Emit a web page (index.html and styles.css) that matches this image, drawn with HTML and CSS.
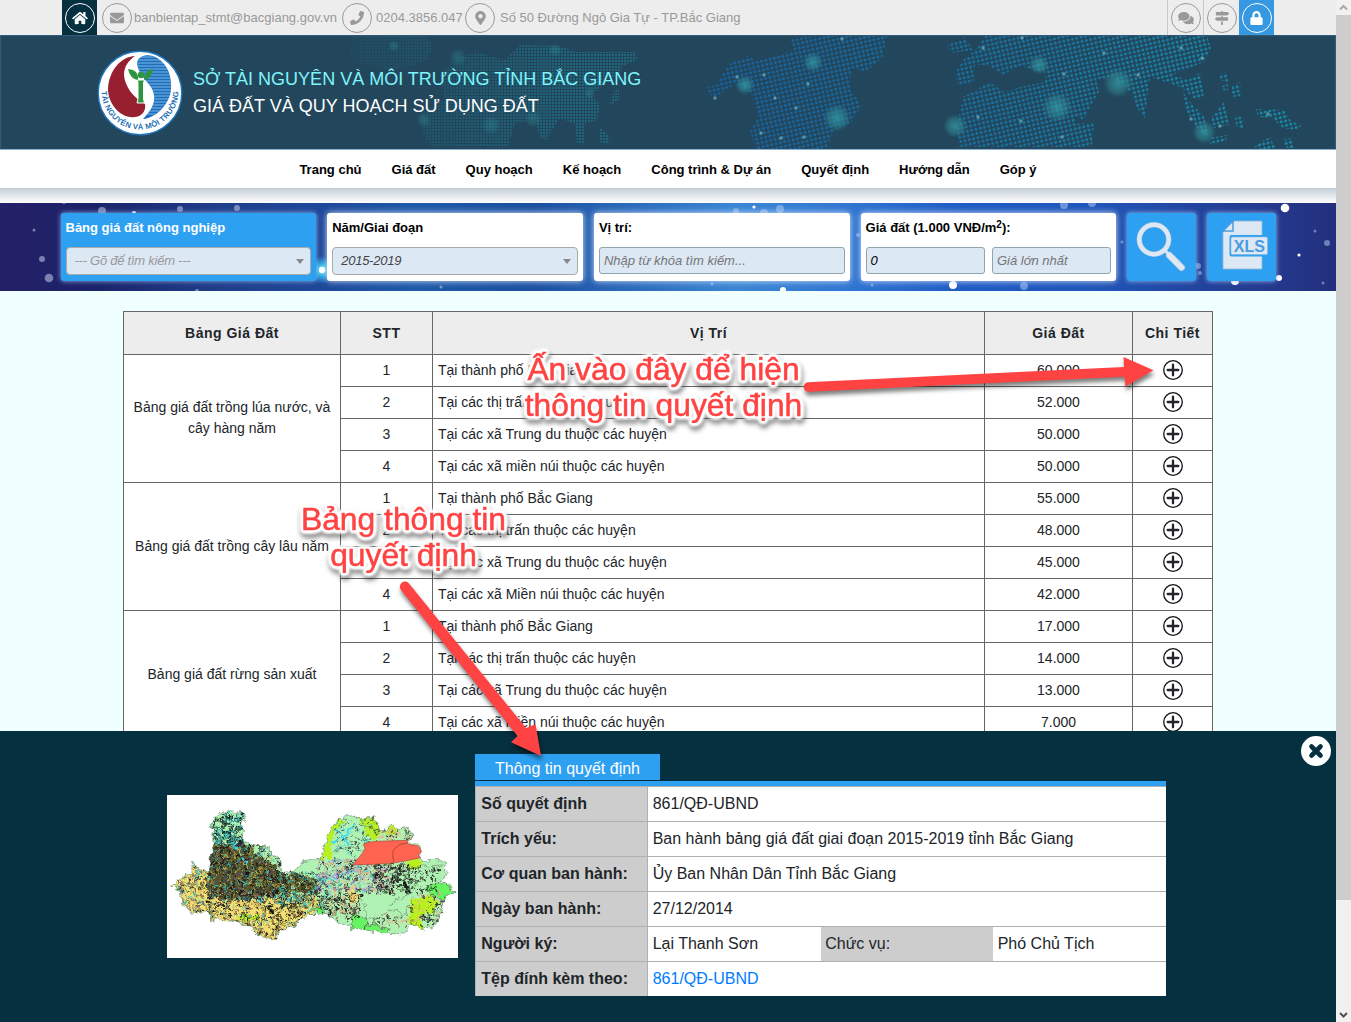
FILE: index.html
```html
<!DOCTYPE html>
<html lang="vi">
<head>
<meta charset="utf-8">
<title>Giá đất và quy hoạch sử dụng đất</title>
<link rel="stylesheet" href="styles.css">
</head>
<body>
<svg class="defs" width="0" height="0">
  <symbol id="i-home" viewBox="0 0 576 512"><path d="M280.37 148.26L96 300.11V464a16 16 0 0 0 16 16l112.06-.29a16 16 0 0 0 15.92-16V368a16 16 0 0 1 16-16h64a16 16 0 0 1 16 16v95.64a16 16 0 0 0 16 16.05L464 480a16 16 0 0 0 16-16V300L295.67 148.26a12.19 12.19 0 0 0-15.3 0zM571.6 251.47L488 182.56V44.05a12 12 0 0 0-12-12h-56a12 12 0 0 0-12 12v72.61L318.47 43a48 48 0 0 0-61 0L4.34 251.47a12 12 0 0 0-1.6 16.9l25.5 31A12 12 0 0 0 45.15 301l235.22-193.74a12.19 12.19 0 0 1 15.3 0L530.9 301a12 12 0 0 0 16.9-1.6l25.5-31a12 12 0 0 0-1.7-16.93z"/></symbol>
  <symbol id="i-mail" viewBox="0 0 512 512"><path d="M502.3 190.8c3.9-3.1 9.7-.2 9.7 4.7V400c0 26.5-21.5 48-48 48H48c-26.5 0-48-21.5-48-48V195.6c0-5 5.7-7.8 9.7-4.7 22.4 17.4 52.1 39.5 154.1 113.6 21.1 15.4 56.7 47.8 92.2 47.6 35.7.3 72-32.8 92.3-47.6 102-74.1 131.6-96.3 154-113.7zM256 320c23.2.4 56.6-29.2 73.4-41.4 132.7-96.3 142.8-104.7 173.4-128.7 5.8-4.5 9.2-11.5 9.2-18.9v-19c0-26.5-21.5-48-48-48H48c-26.5 0-48 21.5-48 48v19c0 7.4 3.4 14.3 9.2 18.9 30.6 23.9 40.7 32.4 173.4 128.7 16.8 12.2 50.2 41.8 73.4 41.4z"/></symbol>
  <symbol id="i-phone" viewBox="0 0 512 512"><path d="M493.4 24.6l-104-24c-11.3-2.6-22.9 3.3-27.5 13.9l-48 112c-4.2 9.8-1.4 21.3 6.9 28l60.6 49.6c-36 76.7-98.9 140.5-177.2 177.2l-49.6-60.6c-6.8-8.3-18.2-11.1-28-6.9l-112 48C3.9 366.5-2 378.1.6 389.4l24 104C27.1 504.2 36.7 512 48 512c256.1 0 464-207.5 464-464 0-11.2-7.7-20.9-18.6-23.4z"/></symbol>
  <symbol id="i-pin" viewBox="0 0 384 512"><path d="M172.268 501.67C26.97 291.031 0 269.413 0 192 0 85.961 85.961 0 192 0s192 85.961 192 192c0 77.413-26.97 99.031-172.268 309.67-9.535 13.774-29.93 13.773-39.464 0zM192 272c44.183 0 80-35.817 80-80s-35.817-80-80-80-80 35.817-80 80 35.817 80 80 80z"/></symbol>
  <symbol id="i-chat" viewBox="0 0 576 512"><path d="M416 192c0-88.4-93.1-160-208-160S0 103.6 0 192c0 34.3 14.1 65.9 38 92-13.4 30.2-35.5 54.2-35.8 54.5-2.2 2.3-2.8 5.7-1.5 8.7S4.8 352 8 352c36.6 0 66.9-12.3 88.7-25 32.2 15.7 70.3 25 111.3 25 114.9 0 208-71.6 208-160zm122 220c23.9-26 38-57.7 38-92 0-66.9-53.5-124.2-129.3-148.1.9 6.6 1.3 13.3 1.3 20.1 0 105.9-107.7 192-240 192-10.8 0-21.3-.8-31.7-1.9C207.8 439.6 281.8 480 368 480c41 0 79.1-9.2 111.3-25 21.8 12.7 52.1 25 88.7 25 3.2 0 6.1-1.9 7.3-4.8 1.3-2.9.7-6.3-1.5-8.7-.3-.3-22.4-24.2-35.8-54.5z"/></symbol>
  <symbol id="i-signs" viewBox="0 0 512 512"><path d="M507.31 84.69L464 41.37c-6-6-14.14-9.37-22.63-9.37H288V16c0-8.84-7.16-16-16-16h-32c-8.84 0-16 7.16-16 16v16H56c-13.25 0-24 10.75-24 24v80c0 13.25 10.75 24 24 24h385.37c8.49 0 16.62-3.37 22.63-9.37l43.31-43.31c6.25-6.26 6.25-16.38 0-22.63zM224 496c0 8.84 7.16 16 16 16h32c8.84 0 16-7.16 16-16V384h-64v112zm232-272H288v-32h-64v32H70.63c-8.49 0-16.62 3.37-22.63 9.37L4.69 276.69c-6.25 6.25-6.25 16.38 0 22.63L48 342.63c6 6 14.14 9.37 22.63 9.37H456c13.25 0 24-10.75 24-24v-80c0-13.25-10.75-24-24-24z"/></symbol>
  <symbol id="i-lock" viewBox="0 0 448 512"><path d="M400 224h-24v-72C376 68.2 307.8 0 224 0S72 68.2 72 152v72H48c-26.5 0-48 21.5-48 48v192c0 26.5 21.5 48 48 48h352c26.5 0 48-21.5 48-48V272c0-26.5-21.5-48-48-48zm-104 0H152v-72c0-39.7 32.3-72 72-72s72 32.3 72 72v72z"/></symbol>
  <symbol id="i-plus" viewBox="0 0 20 20"><circle cx="10" cy="10" r="9.3" fill="#fff" stroke="#111" stroke-width="1.3"/><path d="M10 4.7v10.6M4.7 10h10.6" stroke="#212529" stroke-width="2.3" stroke-linecap="round"/></symbol>
</svg>

<div class="window">
<div class="page">
  <div class="topbar">
    <span class="tile home"><span class="ring"><svg width="16" height="14"><use href="#i-home"/></svg></span></span>
    <span class="ring mail"><svg width="14" height="14"><use href="#i-mail"/></svg></span>
    <span class="t-mail">banbientap_stmt@bacgiang.gov.vn</span>
    <span class="ring"><svg width="14" height="14"><use href="#i-phone"/></svg></span>
    <span class="t-phone">0204.3856.047</span>
    <span class="ring"><svg width="11" height="14"><use href="#i-pin"/></svg></span>
    <span class="t-addr">Số 50 Đường Ngô Gia Tự - TP.Bắc Giang</span>
    <span class="quick">
      <span class="cell"><span class="ring"><svg width="16" height="14"><use href="#i-chat"/></svg></span></span>
      <span class="cell"><span class="ring"><svg width="14" height="14"><use href="#i-signs"/></svg></span></span>
      <span class="tile lock"><span class="ring"><svg width="13" height="14"><use href="#i-lock"/></svg></span></span>
    </span>
  </div>

  <header class="banner">
    <svg class="world" viewBox="0 35 1336 115" width="1336" height="115">
      <defs>
        <linearGradient id="sea" gradientUnits="userSpaceOnUse" x1="700" y1="0" x2="1300" y2="0"><stop offset="0" stop-color="#1a5f9c"/><stop offset=".45" stop-color="#1a6f9c"/><stop offset="1" stop-color="#1a8aa5"/></linearGradient>
        <pattern id="dots" width="4.4" height="4.4" patternUnits="userSpaceOnUse" patternTransform="rotate(-13)"><circle cx="2.2" cy="2.2" r="1.5" fill="#fff"/></pattern>
        <pattern id="fine" width="3" height="3" patternUnits="userSpaceOnUse"><rect width="2" height="2" fill="#1f7488"/></pattern>
        <linearGradient id="fade" gradientUnits="userSpaceOnUse" x1="330" y1="0" x2="560" y2="0"><stop offset="0" stop-color="#fff" stop-opacity=".1"/><stop offset="1" stop-color="#fff" stop-opacity=".7"/></linearGradient>
        <mask id="mfine" maskUnits="userSpaceOnUse" x="300" y="35" width="360" height="115"><path fill="url(#fade)" d="M350 36H425L433 45 428 60 410 66 390 70 350 60ZM440 75 455 60 475 52 505 60 520 45 560 46 575 52 635 52 638 60 622 66 620 80 605 74 600 90 588 92 600 105 597 120 585 124 585 145 577 143 575 124 560 118 546 140 540 138 535 118 515 124 508 146 430 146 422 130 420 114 445 100ZM614 92 619 88 619 100 609 106ZM600 127 609 136 610 144 600 142Z"/></mask>
        <mask id="mdots" maskUnits="userSpaceOnUse" x="690" y="35" width="620" height="115"><path fill="url(#dots)" d="M706 88 718 84 722 74 732 62 748 56 757 61 770 57 794 50 790 40 805 37 825 36H887L882 58 866 72 851 68 850 90 862 105 850 124 834 130 826 149H756L750 130 758 118 752 95 735 84 722 93 713 98ZM948 45 965 37 973 50 950 53ZM963 60 975 50 985 36H1207L1211 48 1204 62 1172 75 1188 80 1201 72 1204 98 1196 100 1182 88 1172 84 1150 77 1147 100 1145 118 1137 108 1131 92 1115 78 1096 79 1099 92 1090 107 1084 120 1074 116 1076 124 1094 122 1092 147H958L957 125 963 97 990 82 1004 92 1025 86 1045 82 1046 73 1020 66 1002 75 990 66 975 64 973 84 958 86 955 74ZM1183 92 1190 102 1204 116 1208 135 1198 130 1186 110ZM1220 74 1228 72 1228 82 1220 80ZM1222 86 1228 84V91L1222 90ZM1232 86 1240 82 1241 96 1232 97ZM1211 118 1224 102 1230 124 1214 128ZM1209 138 1227 135 1226 142 1210 144ZM1235 115 1244 118 1243 129 1236 126ZM1256 109 1285 110 1290 120 1301 126 1296 130 1283 128 1272 118 1258 117ZM1262 141 1270 137 1276 149 1252 149ZM1283 140 1292 138 1294 149 1284 147Z"/></mask>
        <radialGradient id="glow"><stop offset="0" stop-color="#35a0a8" stop-opacity=".75"/><stop offset=".6" stop-color="#318a96" stop-opacity=".5"/><stop offset="1" stop-color="#2f7f8c" stop-opacity="0"/></radialGradient>
      </defs>
      <rect x="300" y="35" width="360" height="115" fill="url(#fine)" mask="url(#mfine)"/>
      <g fill="url(#glow)" opacity=".45"><circle cx="555" cy="50" r="7"/><circle cx="458" cy="57" r="9"/><circle cx="491" cy="125" r="10"/><circle cx="533" cy="119" r="9"/><circle cx="590" cy="93" r="6"/><circle cx="424" cy="120" r="8"/><circle cx="394" cy="46" r="6"/></g>
      <rect x="690" y="35" width="620" height="115" fill="url(#sea)" mask="url(#mdots)"/>
      <g fill="url(#glow)"><circle cx="955" cy="126" r="12"/><circle cx="1039" cy="65" r="10"/><circle cx="1057" cy="107" r="15"/><circle cx="1118" cy="83" r="15"/><circle cx="1204" cy="132" r="12"/><circle cx="745" cy="85" r="10"/><circle cx="813" cy="62" r="10"/><circle cx="837" cy="118" r="14"/></g>
      <g fill="#7dbcc0" opacity=".65"><circle cx="715" cy="98" r="1.7"/><circle cx="737" cy="77" r="1.7"/><circle cx="764" cy="75" r="1.7"/><circle cx="775" cy="98" r="1.7"/><circle cx="796" cy="108" r="1.7"/><circle cx="808" cy="84" r="1.7"/><circle cx="761" cy="133" r="1.7"/><circle cx="781" cy="138" r="1.7"/><circle cx="804" cy="137" r="1.7"/><circle cx="842" cy="39" r="1.7"/><circle cx="983" cy="48" r="1.7"/><circle cx="1022" cy="38" r="1.7"/><circle cx="1104" cy="53" r="1.7"/><circle cx="1181" cy="48" r="1.7"/><circle cx="1202" cy="58" r="1.7"/><circle cx="1138" cy="75" r="1.7"/><circle cx="1064" cy="74" r="1.7"/><circle cx="978" cy="117" r="1.7"/><circle cx="1021" cy="121" r="1.7"/><circle cx="1062" cy="137" r="1.7"/><circle cx="1191" cy="119" r="1.7"/><circle cx="1220" cy="126" r="1.7"/><circle cx="1268" cy="114" r="1.7"/></g>
    </svg>
    <div class="brand">
      <svg class="logo" width="86" height="86" viewBox="-43 -43 86 86">
        <defs><path id="arc" d="M-38.500 -2A38.500 38.500 0 0 0 38.500 -2"/>
        <clipPath id="right"><path d="M-3-30C-2-37 6-39 13-37 26-32 32-19 31-4 30 10 17 25 3 26 15 14 17 4 11-6 5-14-2-20-3-30Z"/></clipPath></defs>
        <circle r="41.800" fill="#fff" stroke="#2276bd" stroke-width="1.4"/>
        <path fill="#961f30" d="M-5-37C-20-36-31-22-32-4-32 10-20 26-5 24 3 23 6 17 5 11-7 4-15-6-16-18-16-27-11-33-5-37Z"/>
        <g clip-path="url(#right)"><rect x="-10" y="-40" width="50" height="70" fill="#1d6fbd"/><path d="M-10-36H40M-10-33H40M-10-30H40M-10-27H40M-10-24H40M-10-21H40M-10-18H40M-10-15H40M-10-12H40M-10-9H40M-10-6H40M-10-3H40M-10 0H40M-10 3H40M-10 6H40M-10 9H40M-10 12H40M-10 15H40M-10 18H40M-10 21H40" stroke="#7db8e6" stroke-width="1.2"/></g>
        <path d="M-2.500-13H4.500L3.500-10 3.500 6 4.500 10H-3L-2 6V-10Z" fill="#2f9440" stroke="#fff" stroke-width="1"/><circle cx="1" cy="-18" r="3.200" fill="#2f9440"/>
        <path d="M-12-24Q-1-23-2-13-10-14-12-24ZM13-24Q4-23 4-13 12-14 13-24Z" fill="#2f9440"/>
        <text class="logo-text"><textPath href="#arc" startOffset="50%">TÀI NGUYÊN VÀ MÔI TRƯỜNG</textPath></text>
      </svg>
      <div class="titles">
        <div class="dept">SỞ TÀI NGUYÊN VÀ MÔI TRƯỜNG TỈNH BẮC GIANG</div>
        <div class="app">GIÁ ĐẤT VÀ QUY HOẠCH SỬ DỤNG ĐẤT</div>
      </div>
    </div>
  </header>

  <nav class="menu"><a>Trang chủ</a><a>Giá đất</a><a>Quy hoạch</a><a>Kế hoạch</a><a>Công trình &amp; Dự án</a><a>Quyết định</a><a>Hướng dẫn</a><a>Góp ý</a></nav>
  <div class="menu-shade"></div>

  <section class="filters">
    <svg class="sparks" width="1336" height="88" viewBox="0 203 1336 88">
      <g fill="#b9c0e0" opacity=".6"><circle cx="102" cy="211" r="4"/><circle cx="180" cy="209" r="3"/><circle cx="237" cy="208" r="3"/><circle cx="42" cy="259" r="3"/><circle cx="49" cy="278" r="4.3"/><circle cx="34" cy="230" r="1.5"/><circle cx="64" cy="202" r="2"/><circle cx="441" cy="287" r="1.5"/><circle cx="197" cy="291" r="2"/></g>
      <g fill="#b5d0f5" opacity=".5"><circle cx="736" cy="211" r="3"/><circle cx="764" cy="213" r="4"/><circle cx="780" cy="209" r="4"/><circle cx="1064" cy="205" r="4"/><circle cx="1092" cy="203" r="4"/><circle cx="1024" cy="286" r="4"/><circle cx="712" cy="284" r="1.5"/><circle cx="872" cy="285" r="1.5"/><circle cx="858" cy="235" r="2"/><circle cx="1122" cy="242" r="1.5"/><circle cx="1198" cy="266" r="3"/><circle cx="1200" cy="273" r="2"/><circle cx="1327" cy="243" r="3"/><circle cx="1315" cy="231" r="1.5"/><circle cx="1323" cy="283" r="1.5"/></g>
      <g fill="#fff"><circle cx="754" cy="207" r="1.6"/><circle cx="783" cy="290" r="3"/><circle cx="953" cy="285" r="4"/><circle cx="1285" cy="208" r="4.3"/><circle cx="1279" cy="278" r="3"/><circle cx="1235" cy="281" r="4"/><circle cx="1299" cy="255" r="1.6"/><circle cx="134" cy="213" r="2"/></g>
      <circle cx="322" cy="270" r="14" fill="url(#cyan)"/><circle cx="322" cy="270" r="3.2" fill="#fff"/>
      <defs><radialGradient id="cyan"><stop offset="0" stop-color="#7ff"/><stop offset=".5" stop-color="#28b5f0" stop-opacity=".8"/><stop offset="1" stop-color="#28b5f0" stop-opacity="0"/></radialGradient></defs>
    </svg>
    <div class="box blue"><b>Bảng giá đất nông nghiệp</b><div class="select hint">--- Gõ để tìm kiếm ---<i class="caret"></i></div></div>
    <div class="box"><b>Năm/Giai đoạn</b><div class="select">2015-2019<i class="caret"></i></div></div>
    <div class="box"><b>Vị trí:</b><div class="input ph">Nhập từ khóa tìm kiếm...</div></div>
    <div class="box"><b>Giá đất (1.000 VNĐ/m<sup>2</sup>):</b><div class="pair"><div class="input">0</div><div class="input ph">Giá lớn nhất</div></div></div>
    <div class="btn"><svg width="69" height="68" viewBox="0 0 69 68"><g fill="none" stroke="#8db5d8" stroke-linecap="round"><circle cx="27" cy="26.500" r="14.700" stroke-width="5.600"/><path d="M42.500 42.500L54.500 54.500" stroke-width="7.400"/></g><g fill="none" stroke="#dce8f4" stroke-linecap="round"><path d="M38 37.500L43.500 43" stroke-width="3"/><circle cx="27" cy="26.500" r="14.700" stroke-width="4.400"/><path d="M42.500 42.500L54.500 54.500" stroke-width="6"/></g></svg></div>
    <div class="btn"><svg width="69" height="68" viewBox="0 0 69 68"><path d="M27 8H55V56H16V19Z" fill="#dce8f4" stroke="#8db5d8" stroke-width=".8"/><path d="M16 18L26 8V18Z" fill="#dce8f4" stroke="#4a9be0" stroke-width="1.5"/><rect x="22.500" y="22" width="38.500" height="21.500" rx="2" fill="#2ea0f2"/><rect x="24" y="24" width="36.500" height="17.500" rx="1.500" fill="#dce8f4" stroke="#8db5d8" stroke-width=".6"/><text x="42.300" y="38.700" class="xls">XLS</text></svg></div>
  </section>

  <main class="content">
    <table class="prices">
      <colgroup><col class="c1"><col class="c2"><col class="c3"><col class="c4"><col class="c5"></colgroup>
      <thead><tr><th>Bảng Giá Đất</th><th>STT</th><th>Vị Trí</th><th>Giá Đất</th><th>Chi Tiết</th></tr></thead>
      <tbody>
      <tr><td rowspan="4" class="two">Bảng giá đất trồng lúa nước, và cây hàng năm</td><td>1</td><td>Tại thành phố Bắc Giang</td><td>60.000</td><td><svg width="20" height="20"><use href="#i-plus"/></svg></td></tr>
      <tr><td>2</td><td>Tại các thị trấn thuộc các huyện</td><td>52.000</td><td><svg width="20" height="20"><use href="#i-plus"/></svg></td></tr>
      <tr><td>3</td><td>Tại các xã Trung du thuộc các huyện</td><td>50.000</td><td><svg width="20" height="20"><use href="#i-plus"/></svg></td></tr>
      <tr><td>4</td><td>Tại các xã miền núi thuộc các huyện</td><td>50.000</td><td><svg width="20" height="20"><use href="#i-plus"/></svg></td></tr>
      <tr><td rowspan="4">Bảng giá đất trồng cây lâu năm</td><td>1</td><td>Tại thành phố Bắc Giang</td><td>55.000</td><td><svg width="20" height="20"><use href="#i-plus"/></svg></td></tr>
      <tr><td>2</td><td>Tại các thị trấn thuộc các huyện</td><td>48.000</td><td><svg width="20" height="20"><use href="#i-plus"/></svg></td></tr>
      <tr><td>3</td><td>Tại các xã Trung du thuộc các huyện</td><td>45.000</td><td><svg width="20" height="20"><use href="#i-plus"/></svg></td></tr>
      <tr><td>4</td><td>Tại các xã Miền núi thuộc các huyện</td><td>42.000</td><td><svg width="20" height="20"><use href="#i-plus"/></svg></td></tr>
      <tr><td rowspan="4">Bảng giá đất rừng sản xuất</td><td>1</td><td>Tại thành phố Bắc Giang</td><td>17.000</td><td><svg width="20" height="20"><use href="#i-plus"/></svg></td></tr>
      <tr><td>2</td><td>Tại các thị trấn thuộc các huyện</td><td>14.000</td><td><svg width="20" height="20"><use href="#i-plus"/></svg></td></tr>
      <tr><td>3</td><td>Tại các xã Trung du thuộc các huyện</td><td>13.000</td><td><svg width="20" height="20"><use href="#i-plus"/></svg></td></tr>
      <tr><td>4</td><td>Tại các xã miền núi thuộc các huyện</td><td>7.000</td><td><svg width="20" height="20"><use href="#i-plus"/></svg></td></tr>
      </tbody>
    </table>
  </main>

  <section class="detail">
    <svg class="map" width="291" height="163" viewBox="21 30 873 489">
      <defs><clipPath id="land"><path id="coast" d="M150 122 170 90 185 82 245 80 257 95 247 118 247 165 290 182 332 184 335 210 360 222 370 262 410 258 430 230 480 222 486 200 505 150 530 105 560 95 600 98 640 98 660 135 680 140 685 120 705 122 712 135 745 130 758 155 740 168 785 185 780 225 855 228 858 262 840 285 870 295 882 322 850 342 842 390 822 432 790 430 750 420 735 450 690 448 620 435 575 430 520 400 500 385 440 390 400 425 370 433 352 440 355 458 335 468 310 455 285 445 275 425 235 415 190 405 155 405 145 375 112 385 95 388 68 350 60 320 38 300 72 275 95 255 98 228 110 250 145 262 150 225 160 200 155 160 165 130Z"/></clipPath>
      <filter id="rough" x="-5%" y="-5%" width="110%" height="110%"><feTurbulence type="fractalNoise" baseFrequency=".05" numOctaves="3" seed="4"/><feDisplacementMap in="SourceGraphic" scale="26" xChannelSelector="R" yChannelSelector="G"/></filter></defs>
      <g filter="url(#rough)"><g clip-path="url(#land)">
        <rect x="30" y="70" width="860" height="410" fill="#b0f2b3"/>
        <path fill="#f3df72" d="M30 220 150 260 240 350 400 330 480 340 470 380 370 440 340 480 30 420Z"/>
        <path fill="#55542f" d="M150 185 250 175 370 265 470 280 480 330 400 320 260 345 140 340Z"/>
        <path fill="#b8f021" d="M480 225 500 150 530 105 555 105 520 150 515 215ZM590 90 650 95 665 150 640 170 610 130ZM682 118 708 122 708 150 682 145ZM755 345 805 330 840 350 820 385 780 395 790 430 745 420ZM740 225 790 222 780 250 740 250ZM230 390 300 390 300 410 240 410Z"/>
        <path fill="#f3df72" d="M550 300 572 300 600 345 575 358Z"/>
        <path fill="#66f560" stroke="#555" stroke-width="2" d="M575 380 620 400 620 435 575 435ZM620 415 690 430 680 448 620 440ZM460 375 495 362 480 392ZM800 300 850 290 885 320 845 345 805 330Z"/>
        <path fill="none" stroke="#4de" stroke-width="7" d="M515 175 545 155 530 130M545 155 580 130M545 155 570 180M190 130 240 200 260 240M480 290 540 270 600 250"/>
        <g id="speckle"></g>
        <path fill="none" stroke="#555" stroke-width="2" opacity=".7" d="M590 330 620 360 615 395 650 405 690 375 735 385 760 345M690 360 740 330 760 300M715 260 760 245 850 240M520 200 570 185 610 200"/>
      </g><use href="#coast" fill="none" stroke="#6a8a70" stroke-width="2"/></g>
      <path d="M578 240 607 205 615 190 610 178 625 172 650 169 740 166 745 178 775 182 785 200 775 210 782 218 735 228 700 234 640 238Z" fill="#ff6450" stroke="#a9483c" stroke-width="2"/>
      <path d="M740 175 720 178 700 195 698 215 702 232" fill="none" stroke="#91352c" stroke-width="2"/>
    </svg>
    <div class="decision">
      <div class="tab">Thông tin quyết định</div>
      <div class="rows">
        <div class="row"><b>Số quyết định</b><span>861/QĐ-UBND</span></div>
        <div class="row"><b>Trích yếu:</b><span>Ban hành bảng giá đất giai đoạn 2015-2019 tỉnh Bắc Giang</span></div>
        <div class="row"><b>Cơ quan ban hành:</b><span>Ủy Ban Nhân Dân Tỉnh Bắc Giang</span></div>
        <div class="row"><b>Ngày ban hành:</b><span>27/12/2014</span></div>
        <div class="row"><b>Người ký:</b><span>Lại Thanh Sơn</span><span class="grey">Chức vụ:</span><span>Phó Chủ Tịch</span></div>
        <div class="row"><b>Tệp đính kèm theo:</b><span><a>861/QĐ-UBND</a></span></div>
      </div>
    </div>
    <svg class="close" width="30" height="30" viewBox="0 0 30 30"><circle cx="15" cy="15" r="15" fill="#fff"/><path d="M10.500 10.500L19.500 19.500M19.500 10.500L10.500 19.500" stroke="#05303f" stroke-width="4.600" stroke-linecap="round"/></svg>
  </section>
</div>
<div class="scrollbar"><svg width="15" height="15"><path d="M4 9.500L7.500 6 11 9.500" fill="none" stroke="#a8a8a8" stroke-width="2"/></svg><div class="thumb"></div><svg width="15" height="15"><path d="M4 6L7.500 9.500 11 6" fill="none" stroke="#505050" stroke-width="2"/></svg></div>

<svg class="notes" width="1351" height="1022">
  <g class="arrow"><path d="M808 382.200 1124 367 1123.500 357 1153.500 370.300 1125.500 386.500 1124.500 376.800 809 391.800A4.800 4.800 0 0 1 808 382.200Z"/></g>
  <g class="arrow"><path d="M409 583.500 526 728 535.500 724.300 541 756 511 742.300 517.500 736 401 590A5 5 0 0 1 409 583.500Z"/></g>
  <g class="note"><g class="halo"><text x="663.500" y="379.500">Ấn vào đây để hiện</text><text x="663.500" y="415.500">thông tin quyết định</text></g></g>
  <g class="note"><g class="halo"><text x="403.500" y="529.500">Bảng thông tin</text><text x="403.500" y="565.500">quyết định</text></g></g>
</svg>
</div>
<script src="map.js"></script>
</body>
</html>
```
FILE: styles.css
```css
* { box-sizing: border-box; }
body { margin: 0; font-family: "Liberation Sans", Arial, sans-serif; color: #212529; background: #f0ffff; }
.defs { position: absolute; }
.window { position: relative; display: flex; width: 1351px; height: 1022px; overflow: hidden; }
.page { width: 1336px; display: flex; flex-direction: column; }

.topbar { height: 35px; flex: none; background: #ededed; display: flex; align-items: center; padding-left: 62px; padding-right: 62px; font-size: 13px; color: #999; white-space: nowrap; }
.ring { width: 30px; height: 30px; border: 1px solid #999; border-radius: 50%; display: flex; align-items: center; justify-content: center; flex: none; position: relative; top: .5px; }
.ring svg { fill: #999; }
.tile { width: 35px; height: 35px; display: flex; align-items: center; justify-content: center; }
.tile .ring { border-color: #fff; }
.tile svg { fill: #fff; }
.home { background: #05303f; }
.lock { background: #3598e0; }
.mail { margin-left: 5px; }
.t-mail { margin: 0 5px 0 2px; width: 203px; }
.t-phone { width: 89px; margin-left: 4px; }
.t-addr { margin-left: 5px; }
.quick { margin-left: auto; display: flex; }
.cell { width: 36px; height: 35px; border-left: 1px solid #c8c8c8; display: flex; align-items: center; justify-content: center; padding-left: 1px; }

.banner { height: 115px; flex: none; position: relative; background: #22465c; box-shadow: inset 0 0 2px #5a92bd, inset 0 -1px 0 #9dbbd2; }
.world { position: absolute; left: 0; top: 0; }
.brand { position: relative; display: flex; padding: 15px 0 0 97px; }
.logo { display: block; }
.logo-text { font-size: 7.700px; font-weight: bold; fill: #1f6fb5; text-anchor: middle; letter-spacing: .25px; }
.titles { padding: 16px 0 0 10px; font-size: 18px; line-height: 27px; white-space: nowrap; }
.dept { color: #7ff5fb; }
.app { color: #fff; }

.menu { height: 38px; flex: none; background: #fff; display: flex; justify-content: center; align-items: center; gap: 30px; font-size: 13px; font-weight: bold; color: #000; }
.menu-shade { height: 15px; flex: none; background: linear-gradient(#c3ced6, #e6e9ef 55%, #fdfdfe); }

.filters { height: 88px; flex: none; position: relative; display: flex; gap: 11px; padding: 10px 0 0 60.500px; background: linear-gradient(90deg, #252067 0, #1b2369 7%, #203d8a 16%, #1f489a 24%, #1e5aa8 31%, #1c4f9f 40%, #2763b4 45%, #3b86d4 55%, #3277d2 63%, #1f5cc4 72%, #2055b8 82%, #233f96 92%, #232f7e 100%); }
.sparks { position: absolute; left: 0; top: 0; }
.box { position: relative; width: 255.700px; height: 68px; flex: none; background: #fff; border-radius: 3px; padding: 5px 5px 0; font-size: 13px; color: #000; box-shadow: 0 0 6px #d5e4fa; }
.box b { display: block; height: 20px; line-height: 20px; margin-bottom: 9px; white-space: nowrap; }
.box sup { font-size: 10px; line-height: 0; vertical-align: 4px; }
.blue { background: #2ea0f2; box-shadow: 0 0 5px #8fb6e6; }
.blue b { color: #fff; }
.select, .input { background: #dce8f4; border: 1px solid #aaa; border-radius: 4px; font-style: italic; }
.select { height: 28px; line-height: 28px; padding: 0 6px 0 8px; display: flex; align-items: center; justify-content: space-between; color: #444; letter-spacing: -.25px; }
.hint { color: #999; }
.caret { border: 4px solid transparent; border-top: 5px solid #888; border-bottom: 0; }
.input { height: 27px; line-height: 25px; padding-left: 4px; border-color: #8fa5ad; border-radius: 3px; flex: 1; }
.ph { color: #757575; }
.pair { display: flex; gap: 7px; }
.btn { position: relative; width: 69px; height: 68px; flex: none; background: #2ea0f2; border-radius: 3px; box-shadow: 0 0 5px #9dbbe8; }
.xls { font-size: 16px; font-weight: bold; fill: #4a9be0; text-anchor: middle; }

.content { flex: 1; min-height: 0; overflow: hidden; background: #f0ffff; padding: 20px 0 0 123px; }
.prices { width: 1090px; table-layout: fixed; border-collapse: collapse; background: #fff; font-size: 14px; line-height: 21px; }
.c1 { width: 217px; } .c2 { width: 92px; } .c3 { width: 552px; } .c4 { width: 148px; } .c5 { width: 80px; }
.prices th, .prices td { border: 1px solid #666; padding: 0 5px; text-align: center; height: 32px; }
.prices th { height: 43px; background: #ededed; letter-spacing: .5px; }
.prices td:nth-last-child(3) { text-align: left; }
.prices .two { padding-bottom: 2px; }
.prices td:last-child { padding-bottom: 2px; }
.prices svg { display: block; margin: 0 auto; }

.detail { height: 291px; flex: none; position: relative; background: #05303f; display: flex; align-items: flex-start; padding: 23px 0 0 167px; }
.map { display: block; margin: 41px 17px 0 0; background: #fff; }
.decision { width: 691px; }
.tab { width: 185px; height: 26px; line-height: 29px; margin-bottom: 1px; background: #2ea0f2; color: #fff; text-align: center; }
.rows { border-top: 5px solid #2ea0f2; }
.row { display: flex; height: 35px; line-height: 33px; border-top: 1px solid #adb1b5; background: #fff; border-left: 1px solid #adb1b5; white-space: nowrap; }
.row b { width: 172px; background: #cdcdcd; border-right: 1px solid #adb1b5; padding-left: 5.300px; }
.row span { width: 172.500px; padding-left: 4.700px; }
.row .grey { background: #cdcdcd; }
.row a { color: #007bff; }
.close { position: absolute; left: 1301px; top: 5px; }

.scrollbar { width: 15px; height: 1022px; background: #f1f1f1; display: flex; flex-direction: column; }
.scrollbar svg { flex: none; }
.thumb { height: 885px; background: #cdcdcd; margin-bottom: auto; }

.notes { position: absolute; left: 0; top: 0; }
.arrow { fill: #ff4242; filter: drop-shadow(1px 4px 2px rgba(0, 0, 0, .5)); }
.note { filter: drop-shadow(1px 4px 2px rgba(0, 0, 0, .45)); }
.note text { font-size: 31.800px; fill: #ff4242; text-anchor: middle; }
.halo { filter: drop-shadow(0 0 1px #fff) drop-shadow(0 0 1px #fff) drop-shadow(0 0 1px #fff) drop-shadow(0 0 1px #fff) drop-shadow(0 0 1px #fff) drop-shadow(0 0 1px #fff); }
.halo text { stroke: #ff4242; stroke-width: .5px; }
```
FILE: map.js
```js
// Scatters small land-use parcels over the province map with a fixed seed.
var seed = 7;
function rnd() { seed = (seed * 16807) % 2147483647; return seed / 2147483647; }
var zones = [
  [150, 85, 100, 100, 380, ['#123', '#1a1a1a', '#2bc4cc', '#223322']],
  [145, 175, 230, 165, 1500, ['#111', '#1a1a1a', '#222', '#2bc4cc', '#a89a40', '#5a4a6a', '#c8b850']],
  [45, 240, 110, 145, 360, ['#222', '#7b5a7b', '#2bc4cc', '#8a7a30']],
  [140, 320, 320, 140, 1150, ['#222', '#111', '#2bc4cc', '#8a7a30', '#f3df72', '#111', '#8a5a5a']],
  [360, 260, 140, 110, 600, ['#111', '#222', '#2bc4cc', '#8a7a30', '#b0f2b3']],
  [470, 220, 230, 100, 800, ['#333', '#c8a0e0', '#e8b088', '#45c8d8', '#222', '#e8b088', '#b48cd0']],
  [490, 320, 110, 80, 260, ['#222', '#111', '#e8b088']],
  [520, 95, 130, 120, 150, ['#333', '#555', '#45d8e8']],
  [640, 235, 110, 90, 260, ['#222', '#111', '#333']],
  [740, 245, 100, 70, 90, ['#222', '#111', '#333']],
  [650, 130, 100, 38, 70, ['#333', '#e8b088']],
  [640, 390, 200, 30, 110, ['#222', '#e8b088', '#333']],
  [750, 320, 100, 70, 90, ['#333', '#e8b088']]
];
var out = '';
zones.forEach(function (z) {
  for (var i = 0; i < z[4]; i++) {
    var x = z[0] + rnd() * z[2], y = z[1] + rnd() * z[3];
    var c = z[5][Math.floor(rnd() * z[5].length)];
    out += '<path d="M' + x.toFixed(1) + ' ' + y.toFixed(1) + 'l' + (rnd() * 12 - 4).toFixed(1) + ' ' + (rnd() * 10 - 5).toFixed(1) +
      'l' + (rnd() * 6 - 3).toFixed(1) + ' ' + (rnd() * 7).toFixed(1) + '" fill="' + c + '" stroke="' + c + '" stroke-width="2"/>';
  }
});
document.getElementById('speckle').innerHTML = out;
```
